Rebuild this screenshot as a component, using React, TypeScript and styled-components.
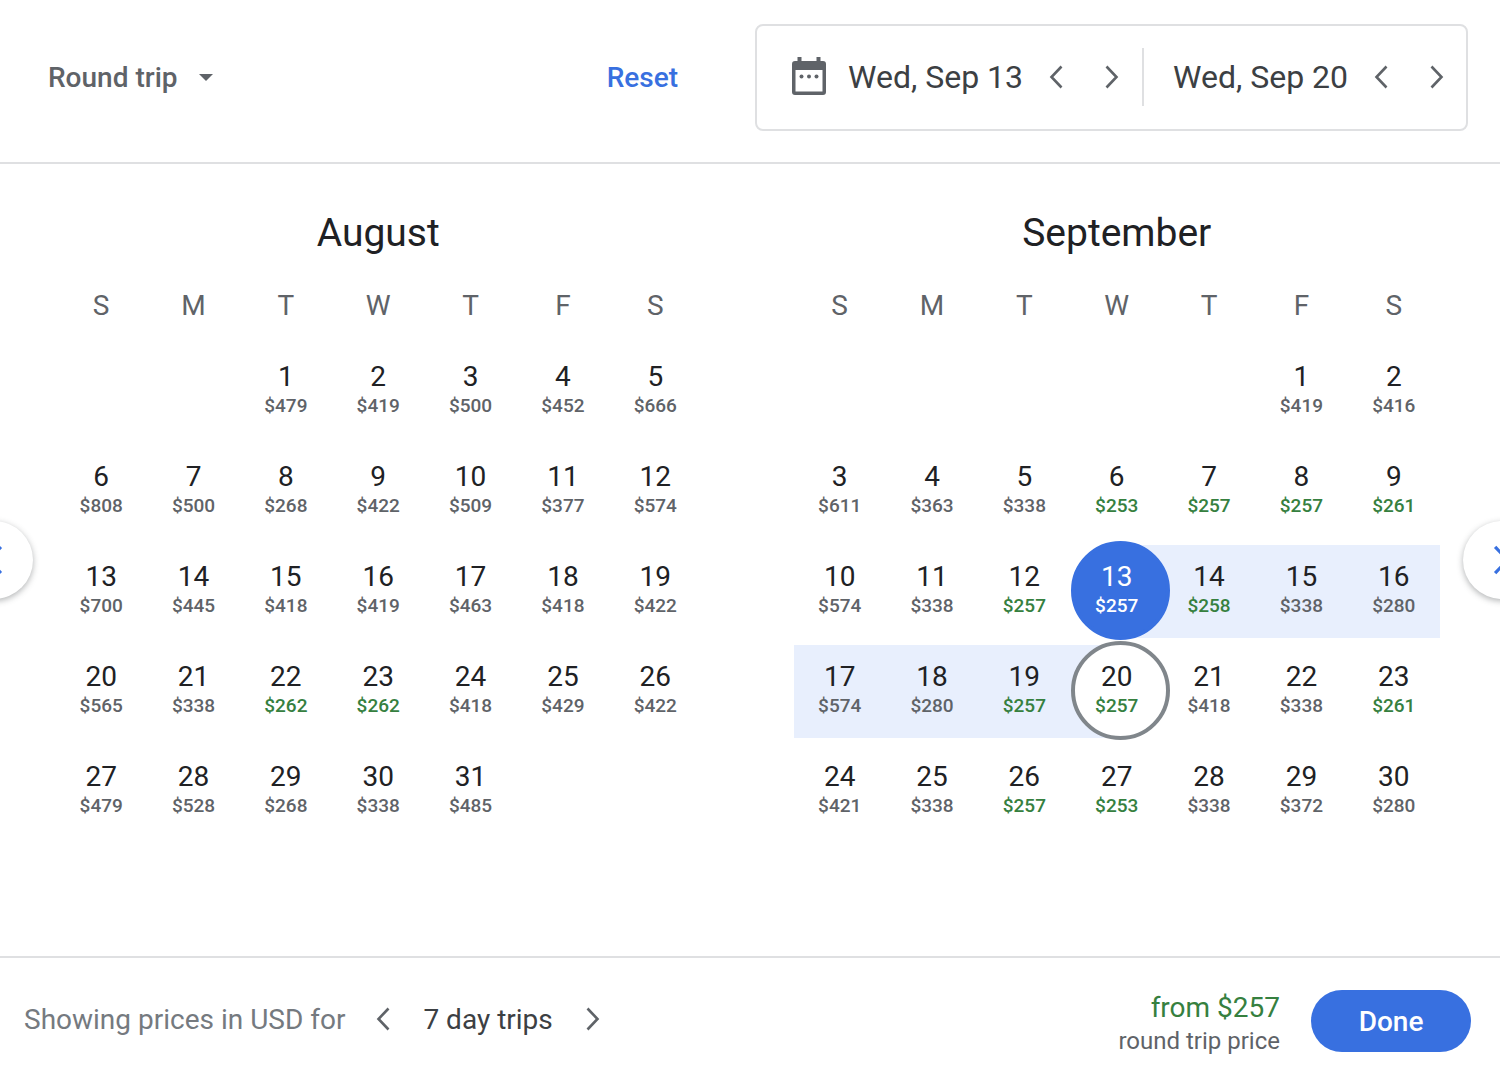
import React, { useState } from "react";
import styled, { createGlobalStyle } from "styled-components";

const color = {
  ink: "#202124",
  text: "#3c4043",
  muted: "#5f6368",
  soft: "#757a7f",
  line: "#dfe0e2",
  blue: "#3870e0",
  range: "#e8effd",
  green: "#36803f",
  ring: "#80868b",
};

const GlobalStyle = createGlobalStyle`
  *, *::before, *::after { box-sizing: border-box; }
  body {
    margin: 0;
    background: #fff;
    color: ${color.ink};
    font-family: Roboto, "Liberation Sans", sans-serif;
  }
  button, input, select { font: inherit; color: inherit; }
  button { padding: 0; border: 0; background: none; cursor: pointer; }
`;

const Page = styled.div`
  display: flex;
  flex-direction: column;
  min-height: 100vh;
  overflow: hidden;
`;

const Header = styled.header`
  display: flex;
  align-items: center;
  padding: 24px 32px 31px 48px;
  border-bottom: 2px solid ${color.line};
`;

const TripType = styled.label`
  display: flex;
  align-items: center;
  gap: 21px;
  color: ${color.muted};
`;

const TripSelect = styled.select`
  appearance: none;
  padding: 0;
  border: 0;
  background: none;
  font-size: 28px;
  font-weight: 500;
  line-height: 32px;
`;

const ResetButton = styled.button`
  margin-left: auto;
  margin-right: 77px;
  color: ${color.blue};
  font-size: 28px;
  font-weight: 500;
  line-height: 32px;
`;

const DateBox = styled.div`
  display: flex;
  align-items: center;
  height: 107px;
  padding: 0 1px 2px 35px;
  border: 2px solid ${color.line};
  border-radius: 8px;
`;

const CalendarIcon = styled.svg`
  width: 34px;
  height: 38px;
  margin: 0 22px 2px 0;
`;

const DateField = styled.div`
  display: flex;
  align-items: center;
  color: ${color.text};

  & + & {
    margin-left: 2px;
    padding-left: 29px;
    border-left: 2px solid ${color.line};
  }
`;

const DateInput = styled.input`
  width: 180px;
  height: 58px;
  padding: 0;
  border: 0;
  outline: 0;
  background: none;
  font-size: 32px;
`;

const StepButton = styled.button`
  display: grid;
  place-items: center;
  width: 56px;
  height: 56px;
  color: ${color.muted};
`;

const Main = styled.main`
  position: relative;
  flex: 1;
  display: grid;
  grid-template-columns: 1fr 1fr;
  align-items: start;
  gap: 92px;
  padding: 44px 60px 0 55px;
`;

const MonthTable = styled.table`
  width: 100%;
  table-layout: fixed;
  border-collapse: separate;
  border-spacing: 0 7px;
`;

const MonthName = styled.caption`
  font-size: 39px;
  line-height: 50px;
`;

const Weekday = styled.th`
  height: 73px;
  padding: 8px 0 0;
  color: ${color.muted};
  font-size: 28px;
  font-weight: 400;
`;

type Mark = "none" | "range" | "start" | "end";

const cellBackground: Record<Mark, string> = {
  none: "none",
  range: `linear-gradient(${color.range}, ${color.range})`,
  start: `linear-gradient(to right, transparent 50%, ${color.range} 50%)`,
  end: `linear-gradient(to right, ${color.range} 50%, transparent 50%)`,
};

const DayCell = styled.td<{ $mark: Mark }>`
  height: 93px;
  padding: 0;
  background: ${(p) => cellBackground[p.$mark]};
`;

const DayButton = styled.button<{ $mark: Mark }>`
  position: relative;
  display: flex;
  flex-direction: column;
  align-items: center;
  width: 100%;
  height: 93px;
  padding-top: 16px;
  color: ${(p) => (p.$mark === "start" ? "#fff" : color.ink)};
`;

const Disc = styled.span<{ $filled: boolean }>`
  position: absolute;
  top: -4px;
  left: 0;
  width: 99px;
  height: 99px;
  border: 4px solid ${(p) => (p.$filled ? color.blue : color.ring)};
  border-radius: 50%;
  background: ${(p) => (p.$filled ? color.blue : "#fff")};
`;

const DayNumber = styled.span`
  position: relative;
  font-size: 28px;
  line-height: 32px;
`;

const Price = styled.span<{ $tone: string }>`
  position: relative;
  color: ${(p) => p.$tone};
  font-size: 19px;
  font-weight: 500;
  line-height: 26px;
`;

const PageButton = styled.button<{ $side: "left" | "right" }>`
  position: absolute;
  top: 357px;
  ${(p) => (p.$side === "left" ? "left: -45px;" : "right: -41px;")}
  display: grid;
  place-items: center;
  width: 78px;
  height: 78px;
  border-radius: 50%;
  background: #fff;
  color: ${color.blue};
  box-shadow: 0 2px 6px rgba(60, 64, 67, 0.4);
`;

const Footer = styled.footer`
  display: flex;
  align-items: center;
  padding: 27px 29px 20px 24px;
  border-top: 2px solid ${color.line};
  font-size: 28px;
`;

const TripLengthPicker = styled.div`
  display: flex;
  align-items: center;
  padding-bottom: 4px;
`;

const Note = styled.span`
  margin-right: 10px;
  color: ${color.soft};
`;

const TripLength = styled.output`
  margin: 0 12px;
  color: ${color.text};
`;

const Summary = styled.div`
  margin-left: auto;
  margin-right: 31px;
  padding-top: 6px;
  text-align: right;
`;

const Total = styled.div`
  color: ${color.green};
  line-height: 34px;
`;

const TotalNote = styled.div`
  color: ${color.muted};
  font-size: 24px;
  line-height: 32px;
`;

const DoneButton = styled.button`
  width: 160px;
  height: 62px;
  border-radius: 31px;
  background: ${color.blue};
  color: #fff;
  font-weight: 500;
`;

function Chevron({ dir, w = 14, h = 24 }: { dir: "left" | "right"; w?: number; h?: number }) {
  return (
    <svg width={w} height={h} viewBox="0 0 14 24" aria-hidden="true">
      <path
        d={dir === "left" ? "M12.5 1.5 2.500 12l10 10.500" : "M1.500 1.500l10 10.500-10 10.500"}
        fill="none"
        stroke="currentColor"
        strokeWidth="2.6"
      />
    </svg>
  );
}

type Month = { name: string; offset: number; prices: number[] };

const months: Month[] = [
  {
    name: "August",
    offset: 2,
    prices: [
      479, 419, 500, 452, 666, 808, 500, 268, 422, 509, 377, 574, 700, 445, 418, 419, 463, 418, 422,
      565, 338, 262, 262, 418, 429, 422, 479, 528, 268, 338, 485,
    ],
  },
  {
    name: "September",
    offset: 5,
    prices: [
      419, 416, 611, 363, 338, 253, 257, 257, 261, 574, 338, 257, 257, 258, 338, 280, 574, 280, 257,
      257, 418, 338, 261, 421, 338, 257, 253, 338, 372, 280,
    ],
  },
];

const weekdays = [
  ["S", "Sunday"],
  ["M", "Monday"],
  ["T", "Tuesday"],
  ["W", "Wednesday"],
  ["T", "Thursday"],
  ["F", "Friday"],
  ["S", "Saturday"],
];

const LOW_FARE = 262;

function markOf(month: string, day: number): Mark {
  if (month !== "September" || day < 13 || day > 20) return "none";
  if (day === 13) return "start";
  if (day === 20) return "end";
  return "range";
}

function weeksOf({ offset, prices }: Month): number[][] {
  const count = Math.ceil((offset + prices.length) / 7);
  return Array.from({ length: count }, (_, week) =>
    Array.from({ length: 7 }, (_, i) => {
      const day = week * 7 + i - offset + 1;
      return day >= 1 && day <= prices.length ? day : 0;
    }),
  );
}

function Day({ month, day, price }: { month: string; day: number; price: number }) {
  const mark = markOf(month, day);
  const tone = mark === "start" ? "#fff" : price <= LOW_FARE ? color.green : color.muted;
  return (
    <DayCell $mark={mark}>
      <DayButton type="button" $mark={mark}>
        {(mark === "start" || mark === "end") && <Disc $filled={mark === "start"} />}
        <DayNumber>{day}</DayNumber>
        <Price $tone={tone}>${price}</Price>
      </DayButton>
    </DayCell>
  );
}

function MonthView({ month }: { month: Month }) {
  return (
    <MonthTable>
      <MonthName>{month.name}</MonthName>
      <thead>
        <tr>
          {weekdays.map(([letter, name]) => (
            <Weekday key={name} scope="col" abbr={name}>
              {letter}
            </Weekday>
          ))}
        </tr>
      </thead>
      <tbody>
        {weeksOf(month).map((week, w) => (
          <tr key={w}>
            {week.map((day, i) =>
              day ? (
                <Day key={i} month={month.name} day={day} price={month.prices[day - 1]} />
              ) : (
                <DayCell key={i} $mark="none" />
              ),
            )}
          </tr>
        ))}
      </tbody>
    </MonthTable>
  );
}

function DateStepper({ label, initial }: { label: string; initial: string }) {
  const [value, setValue] = useState(initial);
  return (
    <DateField>
      <DateInput aria-label={label} value={value} onChange={(e) => setValue(e.target.value)} />
      <StepButton type="button" aria-label={`${label}: one day earlier`}>
        <Chevron dir="left" />
      </StepButton>
      <StepButton type="button" aria-label={`${label}: one day later`}>
        <Chevron dir="right" />
      </StepButton>
    </DateField>
  );
}

export default function App() {
  return (
    <Page>
      <GlobalStyle />
      <Header>
        <TripType>
          <TripSelect aria-label="Trip type">
            <option>Round trip</option>
          </TripSelect>
          <svg width="14" height="7" viewBox="0 0 14 7" aria-hidden="true">
            <path d="M0 0h14L7 7z" fill="currentColor" />
          </svg>
        </TripType>
        <ResetButton type="button">Reset</ResetButton>
        <DateBox>
          <CalendarIcon viewBox="0 0 34 38" aria-hidden="true">
            <path
              fill={color.muted}
              fillRule="evenodd"
              d="M5.500 0h4v4h15V0h4v4H31a3 3 0 0 1 3 3v28a3 3 0 0 1-3 3H3a3 3 0 0 1-3-3V7a3 3 0 0 1 3-3h2.500zM3.500 13v21.500h27V13z"
            />
            <g fill={color.muted}>
              <circle cx="9.500" cy="19.500" r="2" />
              <circle cx="17" cy="19.500" r="2" />
              <circle cx="24.500" cy="19.500" r="2" />
            </g>
          </CalendarIcon>
          <DateStepper label="Departure" initial="Wed, Sep 13" />
          <DateStepper label="Return" initial="Wed, Sep 20" />
        </DateBox>
      </Header>
      <Main>
        {months.map((month) => (
          <MonthView key={month.name} month={month} />
        ))}
        <PageButton type="button" $side="left" aria-label="Previous months">
          <Chevron dir="left" w={18} h={30} />
        </PageButton>
        <PageButton type="button" $side="right" aria-label="Next months">
          <Chevron dir="right" w={18} h={30} />
        </PageButton>
      </Main>
      <Footer>
        <TripLengthPicker>
          <Note>Showing prices in USD for</Note>
          <StepButton type="button" aria-label="Shorter trip">
            <Chevron dir="left" />
          </StepButton>
          <TripLength>7 day trips</TripLength>
          <StepButton type="button" aria-label="Longer trip">
            <Chevron dir="right" />
          </StepButton>
        </TripLengthPicker>
        <Summary>
          <Total>from $257</Total>
          <TotalNote>round trip price</TotalNote>
        </Summary>
        <DoneButton type="button">Done</DoneButton>
      </Footer>
    </Page>
  );
}
